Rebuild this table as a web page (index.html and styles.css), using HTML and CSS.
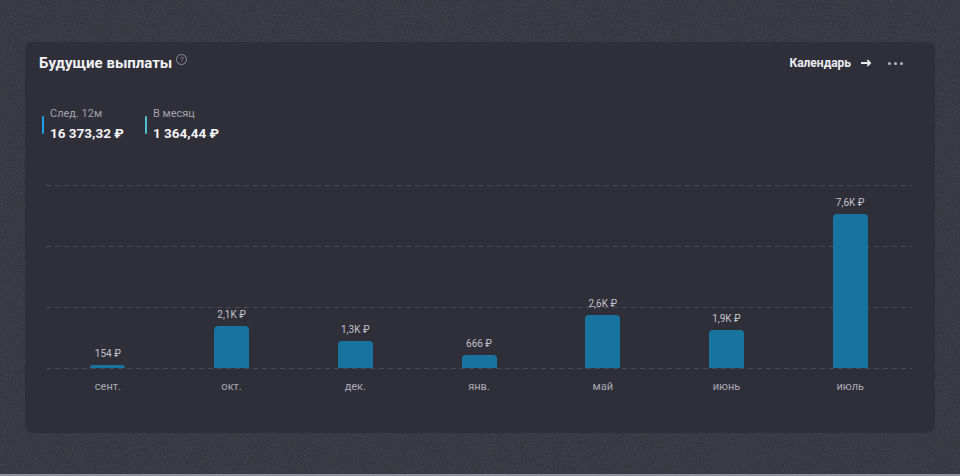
FILE: index.html
```html
<!DOCTYPE html>
<html lang="ru">
<head>
<meta charset="utf-8">
<link rel="stylesheet" href="styles.css">
</head>
<body>
<svg class="noise" width="960" height="476" aria-hidden="true">
  <filter id="n"><feTurbulence type="fractalNoise" baseFrequency="0.9" numOctaves="2" stitchTiles="stitch"/><feColorMatrix type="matrix" values="0 0 0 0 0.5  0 0 0 0 0.5  0 0 0 0 0.55  0 0 0 0.18 0"/></filter>
  <rect width="960" height="476" filter="url(#n)"/>
</svg>
<div class="page">
  <section class="card">
    <header class="head">
      <h2 class="title">Будущие выплаты<span class="help">?</span></h2>
      <div class="actions">
        <span class="cal">Календарь</span>
        <svg class="arrow" width="10" height="8" viewBox="0 0 10 8"><path d="M0 4H8.8M6.3 1.2L9.2 4L6.3 6.8" fill="none" stroke="#e8e8ee" stroke-width="1.8"/></svg>
        <span class="dots"><i></i><i></i><i></i></span>
      </div>
    </header>
    <div class="stats">
      <div class="stat s1">
        <div class="lbl">След. 12м</div>
        <div class="val">16 373,32 ₽</div>
      </div>
      <div class="stat s2">
        <div class="lbl">В месяц</div>
        <div class="val">1 364,44 ₽</div>
      </div>
    </div>
    <div class="chart">
      <div class="plot">
        <div class="grid"><div class="gl"></div><div class="gl"></div><div class="gl"></div><div class="gl"></div></div>
        <div class="bars">
          <div class="col"><span class="v">154 ₽</span><div class="bar" style="height:3px"></div></div>
          <div class="col"><span class="v">2,1K ₽</span><div class="bar" style="height:42px"></div></div>
          <div class="col"><span class="v">1,3K ₽</span><div class="bar" style="height:27px"></div></div>
          <div class="col"><span class="v">666 ₽</span><div class="bar" style="height:13px"></div></div>
          <div class="col"><span class="v">2,6K ₽</span><div class="bar" style="height:53px"></div></div>
          <div class="col"><span class="v">1,9K ₽</span><div class="bar" style="height:38px"></div></div>
          <div class="col"><span class="v">7,6K ₽</span><div class="bar" style="height:154px"></div></div>
        </div>
      </div>
      <div class="months">
        <span>сент.</span><span>окт.</span><span>дек.</span><span>янв.</span><span>май</span><span>июнь</span><span>июль</span>
      </div>
    </div>
  </section>
</div>
<div class="bottomline"></div>
</body>
</html>
```
FILE: styles.css
```css
html, body {
  margin: 0;
  padding: 0;
}
body {
  width: 960px;
  height: 476px;
  overflow: hidden;
  background: #2c2d36;
  font-family: Roboto, "Noto Sans", sans-serif;
  position: relative;
}
.noise {
  position: absolute;
  left: 0;
  top: 0;
}
.page {
  position: relative;
  padding: 42px 0 0 25px;
}
.card {
  width: 910px;
  height: 391px;
  box-sizing: border-box;
  background: #2f2f3a;
  border-radius: 8px;
  padding: 0 32px 0 14px;
}
.head {
  display: flex;
  justify-content: space-between;
  align-items: center;
  height: 40px;
  padding-top: 1px;
}
.title {
  margin: 0;
  color: #f2f2f5;
  font-size: 15px;
  font-weight: 700;
  display: flex;
  align-items: flex-start;
}
.help {
  margin-left: 4px;
  margin-top: 0;
  width: 9px;
  height: 9px;
  border: 1px solid #8d8d98;
  border-radius: 50%;
  color: #8d8d98;
  font-size: 8px;
  font-weight: 400;
  line-height: 9px;
  text-align: center;
}
.actions {
  display: flex;
  align-items: center;
  color: #ececf2;
  font-size: 12px;
  font-weight: 700;
}
.arrow {
  margin-left: 10px;
}
.dots {
  display: flex;
  gap: 3px;
  margin-left: 17px;
}
.dots i {
  width: 3px;
  height: 3px;
  border-radius: 50%;
  background: #b5b5c0;
}
.stats {
  display: flex;
  margin-top: 24px;
  margin-left: 3px;
}
.stat {
  position: relative;
  padding-left: 8px;
  width: 95px;
}
.stat::before {
  content: "";
  position: absolute;
  left: 0;
  top: 9px;
  width: 2px;
  height: 18px;
  border-radius: 1px;
  background: #1aa0e6;
}
.s2::before {
  background: #4fbfd0;
}
.lbl {
  color: #a2a2ad;
  font-size: 11px;
  line-height: 14px;
}
.val {
  color: #f4f4f7;
  font-size: 13.5px;
  font-weight: 700;
  line-height: 20px;
  margin-top: 2px;
}
.chart {
  margin-top: 42px;
  margin-left: 7px;
  width: 866px;
}
.plot {
  position: relative;
  height: 184px;
}
.grid {
  position: absolute;
  inset: 0;
  display: flex;
  flex-direction: column;
  justify-content: space-between;
}
.gl {
  height: 1px;
  background: repeating-linear-gradient(to right, #4a4a56 0 5px, transparent 5px 9px);
}
.bars {
  position: relative;
  display: flex;
  height: 183px;
}
.col {
  flex: 1;
  display: flex;
  flex-direction: column;
  justify-content: flex-end;
  align-items: center;
}
.v {
  color: #c2c2ca;
  font-size: 10px;
  line-height: 13px;
  margin-bottom: 5px;
}
.bar {
  width: 35px;
  background: #18749f;
  border-radius: 4px 4px 0 0;
}
.months {
  display: flex;
  margin-top: 11px;
}
.months span {
  flex: 1;
  text-align: center;
  color: #a9a9b3;
  font-size: 11px;
  line-height: 14px;
}
.bottomline {
  position: absolute;
  left: 0;
  bottom: 0;
  width: 960px;
  height: 2px;
  background: #8f9099;
}
```
